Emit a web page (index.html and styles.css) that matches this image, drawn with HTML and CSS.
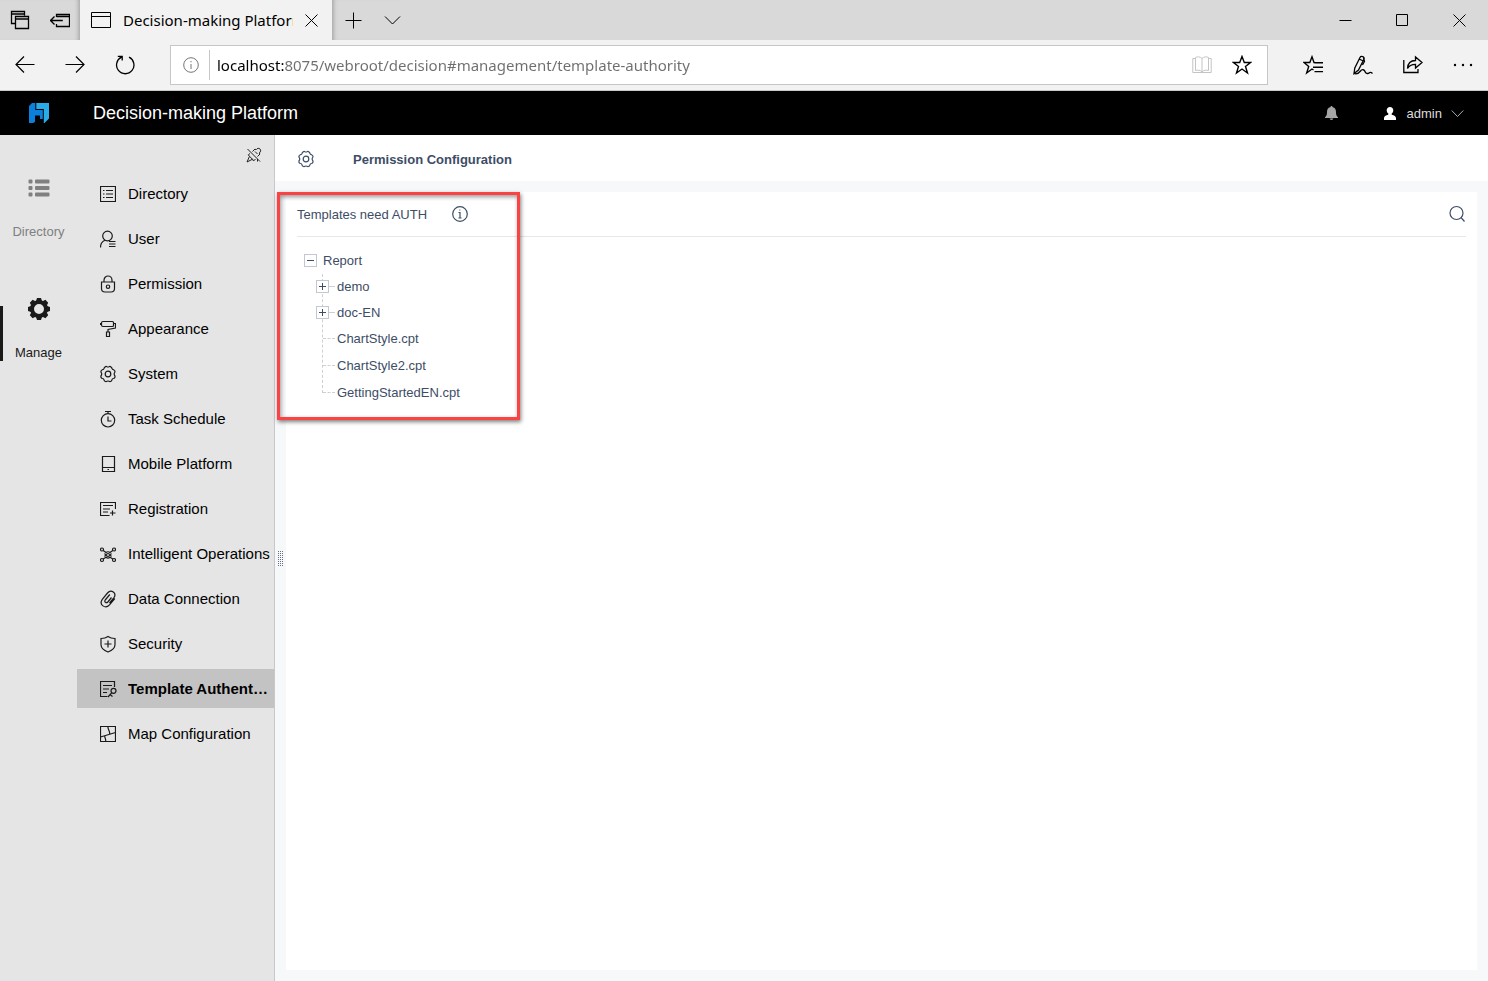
FILE: index.html
```html
<!DOCTYPE html>
<html lang="en">
<head>
<meta charset="utf-8">
<title>Decision-making Platform</title>
<link rel="stylesheet" href="styles.css">
</head>
<body>
<div class="window">
  <div class="tabbar">
    <div class="tab-tools">
      <button class="plain" aria-label="Tabs set aside"><svg width="20" height="20" viewBox="0 0 20 20"><path stroke-width="1.300" d="M5.500 13.500h-4v-12h13v4M1.500 4h13M5.500 6.500h13v12h-13zM5.500 9h13"/></svg></button>
      <button class="plain" aria-label="Set tabs aside"><svg width="20" height="20" viewBox="0 0 20 20"><path stroke-width="1.300" d="M6.500 7V4.500h13v12h-13V14M6.500 6.500h13M.8 10.500h12M4.500 6.500l-4 4 4 4"/></svg></button>
    </div>
    <div class="tab">
      <svg width="20" height="16" viewBox="0 0 20 16"><path d="M.5.5h19v15H.5zM.5 4.500h19"/></svg>
      <span class="tab-title">Decision-making Platform</span>
      <button class="plain" aria-label="Close tab"><svg width="13" height="13" viewBox="0 0 13 13"><path d="M.5.5l12 12M12.500.5l-12 12"/></svg></button>
    </div>
    <div class="tab-more">
      <button class="plain" aria-label="New tab"><svg width="17" height="17" viewBox="0 0 17 17"><path d="M8.500.5v16M.5 8.500h16"/></svg></button>
      <button class="plain" aria-label="Tab previews"><svg width="17" height="17" viewBox="0 0 17 17"><path d="M1 4.500l7.500 7.500L16 4.500"/></svg></button>
    </div>
    <div class="window-controls">
      <button class="plain" aria-label="Minimize"><svg width="13" height="13" viewBox="0 0 13 13"><path d="M.5 6.500h12"/></svg></button>
      <button class="plain" aria-label="Maximize"><svg width="13" height="13" viewBox="0 0 13 13"><path d="M.5.5h11v11H.5z"/></svg></button>
      <button class="plain" aria-label="Close"><svg width="13" height="13" viewBox="0 0 13 13"><path d="M.5.5l12 12M12.500.5l-12 12"/></svg></button>
    </div>
  </div>

  <div class="navbar">
    <div class="nav-buttons">
      <button class="plain" aria-label="Back"><svg width="20" height="20" viewBox="0 0 20 20"><path stroke-width="1.200" d="M9 1.500L1 9.500l8 8M1 9.500h18.500"/></svg></button>
      <button class="plain" aria-label="Forward"><svg width="20" height="20" viewBox="0 0 20 20"><path stroke-width="1.200" d="M11 1.500l8 8-8 8M19 9.500H.5"/></svg></button>
      <button class="plain" aria-label="Refresh"><svg width="20" height="20" viewBox="0 0 20 20"><path stroke-width="1.300" d="M14 2.200A8.700 8.700 0 1 1 6.500 2.200M2.800 1.400h4.400v4"/></svg></button>
    </div>
    <div class="address">
      <svg class="muted" width="16" height="16" viewBox="0 0 16 16"><circle cx="8" cy="8" r="7.300"/><path d="M8 7v5M8 4v1.300"/></svg>
      <span class="address-rule"></span>
      <input class="url" type="text" aria-label="Address" value="localhost:8075/webroot/decision#management/template-authority">
      <button class="plain" aria-label="Reading view"><svg class="faint" width="20" height="18" viewBox="0 0 20 18"><path d="M10 2.500C8 .5 5 .5 3.500 1.500v13c2-.7 5-.5 6.500 1.500 1.500-2 4.500-2.200 6.500-1.500v-13C15 .5 12 .5 10 2.500zM10 2.500V16M3 2.500H.8v14H10M17 2.500h2.200v14H10"/></svg></button>
      <button class="plain" aria-label="Favorite"><svg width="20" height="20" viewBox="0 0 20 20"><path stroke-width="1.400" d="M10 1.500l2.300 6h6.200l-5 3.900 2 6.600-5.500-4-5.500 4 2-6.600-5-3.900h6.200z"/></svg></button>
    </div>
    <div class="nav-tools">
      <button class="plain" aria-label="Hub"><svg width="20" height="20" viewBox="0 0 20 20"><path stroke-width="1.400" d="M11.500 7.500H11L9 1.800 6.800 7.500H1l4.700 4-2 6.500L9 14l1.500 1M11.500 7.700H20M10 12.200h10M11.500 16.600H20"/></svg></button>
      <button class="plain" aria-label="Add notes"><svg width="20" height="20" viewBox="0 0 20 20"><path stroke-width="1.300" d="M1 18.500l.8-5.500L7 2.500c1-2 5-.7 4 1.500L5.500 15zM6 4l4.500 2M10.500 2.500l1 4L9.500 10M1 18.500c3 1 5-.5 6.500-2.500s4-1.500 4.500.5 3 2.500 4 1.500 1.800-1.200 3.500.5"/></svg></button>
      <button class="plain" aria-label="Share"><svg width="20" height="20" viewBox="0 0 20 20"><path stroke-width="1.300" d="M.8 5v12.500H15V14M4.500 13.500c.3-5 3-8 8-8V2L19 7.500 12.500 13V9.300c-4 0-6.500 1.200-8 4.200z"/></svg></button>
      <button class="plain" aria-label="Settings and more"><svg class="solid" width="20" height="20" viewBox="0 0 20 20"><circle cx="2" cy="10" r="1.200"/><circle cx="10" cy="10" r="1.200"/><circle cx="18" cy="10" r="1.200"/></svg></button>
    </div>
  </div>

  <header class="app-header">
    <svg class="logo" width="20" height="20" viewBox="0 0 20 20"><path fill="#0a7fdc" d="M3 0h3.300v7h7.500v9H11v-3.500H6V19l-2 1H0V3z"/><path fill="#29abe8" d="M7.300 0H20v15.500L15.500 20h-.7V6H7.300z"/></svg>
    <h1 class="app-name">Decision-making Platform</h1>
    <button class="plain bell" aria-label="Notifications"><svg width="13" height="14" viewBox="0 0 13 14"><path fill="#a6a6a6" d="M6.500 0c.7 0 1 .5 1 1 2.500.6 3.500 2.500 3.500 5 0 3 .5 4 2 5.200v.8H0v-.8C1.500 10 2 9 2 6c0-2.500 1-4.400 3.500-5 0-.5.300-1 1-1zM4.700 12.500h3.600a1.800 1.500 0 0 1-3.600 0z"/></svg></button>
    <button class="plain account"><svg width="12" height="13" viewBox="0 0 12 13"><path fill="#fff" d="M6 0c2 0 3.300 1.400 3.300 3.300C9.300 4.700 8.600 6 7.700 6.600v1.200c2.700.6 4.300 1.500 4.300 3.500V13H0v-1.700c0-2 1.600-2.900 4.300-3.500V6.600C3.400 6 2.700 4.700 2.700 3.300 2.700 1.400 4 0 6 0z"/></svg><span>admin</span><svg class="chevron" width="13" height="13" viewBox="0 0 13 13"><path d="M.7 3.500l5.800 6 5.800-6"/></svg></button>
  </header>

  <div class="workspace">
    <nav class="rail">
      <button class="plain rail-item"><svg width="22" height="22" viewBox="0 0 22 22"><path fill="#808080" d="M1.500 2.500h2a1 1 0 0 1 1 1v2a1 1 0 0 1-1 1h-2a1 1 0 0 1-1-1v-2a1 1 0 0 1 1-1zm6.500 0h12.500a1 1 0 0 1 1 1v2a1 1 0 0 1-1 1H8a1 1 0 0 1-1-1v-2a1 1 0 0 1 1-1zM1.500 9h2a1 1 0 0 1 1 1v2a1 1 0 0 1-1 1h-2a1 1 0 0 1-1-1v-2a1 1 0 0 1 1-1zM8 9h12.500a1 1 0 0 1 1 1v2a1 1 0 0 1-1 1H8a1 1 0 0 1-1-1v-2a1 1 0 0 1 1-1zm-6.500 6.500h2a1 1 0 0 1 1 1v2a1 1 0 0 1-1 1h-2a1 1 0 0 1-1-1v-2a1 1 0 0 1 1-1zm6.500 0h12.500a1 1 0 0 1 1 1v2a1 1 0 0 1-1 1H8a1 1 0 0 1-1-1v-2a1 1 0 0 1 1-1z"/></svg><span>Directory</span></button>
      <button class="plain rail-item active"><svg width="22" height="22" viewBox="0 0 22 22"><circle cx="11" cy="11" r="7" stroke="#1a1a1a" stroke-width="4"/><g fill="#1a1a1a"><path id="tooth" d="M8 3L9 0h4l1 3z"/><use href="#tooth" transform="rotate(45 11 11)"/><use href="#tooth" transform="rotate(90 11 11)"/><use href="#tooth" transform="rotate(135 11 11)"/><use href="#tooth" transform="rotate(180 11 11)"/><use href="#tooth" transform="rotate(225 11 11)"/><use href="#tooth" transform="rotate(270 11 11)"/><use href="#tooth" transform="rotate(315 11 11)"/></g></svg><span>Manage</span></button>
    </nav>

    <aside class="sidebar">
      <button class="plain pin" aria-label="Unpin menu"><svg width="16" height="16" viewBox="0 0 16 16"><path d="M1.500 2l12.500 12.500M6.500 4.500L9 2l1 .8c1.300-1.800 3-1.800 4-.8s1 2.700-.8 4l.8 1-2.500 2.500M4 6.500L2.300 7.800l1.200 1.500L1 15l5.500-2.800 1 1.800L9.500 12M3.500 9.300l3 3M9 4.500L11.500 7M11.500 12v2.500"/></svg></button>
      <ul class="menu">
        <li><a href="#directory"><svg width="16" height="18" viewBox="0 0 16 18"><path d="M.5 1.500h15v15H.5zM3 5.500h1.500M6 5.500h7M3 9h1.500M6 9h7M3 12.500h1.500M6 12.500h7"/></svg><span>Directory</span></a></li>
        <li><a href="#user"><svg width="16" height="18" viewBox="0 0 16 18"><circle cx="7.500" cy="6" r="4.800"/><path d="M.5 17.500c0-4 1.500-6 4.500-7.200M9 11.500h6.500M9 14h6.500M9 16.500h6.500"/></svg><span>User</span></a></li>
        <li><a href="#permission"><svg width="16" height="18" viewBox="0 0 16 18"><path d="M4 7V5.200a4 4.200 0 0 1 8 0V7M1.500 7h13v6.500q0 3.500-3.500 3.500H5q-3.500 0-3.500-3.500z"/><circle cx="8" cy="11.700" r="1.700"/></svg><span>Permission</span></a></li>
        <li><a href="#appearance"><svg width="16" height="18" viewBox="0 0 16 18"><path d="M3 1.500h9.500q1 0 1 1v3q0 1-1 1H3q-1.500 0-1.500-1.500V3Q1.500 1.500 3 1.500zM.5 3v2M13.500 3.500h2v4.500L8 9.500v2.500M6.500 12h3v4.500h-3z"/></svg><span>Appearance</span></a></li>
        <li><a href="#system"><svg width="16" height="18" viewBox="0 0 16 18"><path id="cog" d="M5 2q1-1 2-.3 1 .6 2 0 1-.7 2 .3.800.6 1 1.500.3 1 1.500 1.200 1.500.5 1.500 1.800-.1 1-.6 1.500-.6 1 0 2 .8.8.6 2-.3 1.300-1.500 1.500-1.300.1-1.600 1.300-.2 1-.9 1.500-1 .7-2 0-1-.6-2 0-1 .7-2 0-.8-.6-1-1.500-.3-1.100-1.600-1.300-1.200-.3-1.500-1.500-.1-1.200.6-2 .6-1 0-2-.6-.6-.6-1.500 0-1.300 1.500-1.800Q3.800 4.500 4 3.500 4.300 2.500 5 2z"/><circle cx="8" cy="9" r="2.800"/></svg><span>System</span></a></li>
        <li><a href="#schedule"><svg width="16" height="18" viewBox="0 0 16 18"><circle cx="8" cy="10.300" r="6.700"/><path d="M5 1.500h6M8 1.500v2M8 6.500v4.500h3.500"/></svg><span>Task Schedule</span></a></li>
        <li><a href="#mobile"><svg width="16" height="18" viewBox="0 0 16 18"><path d="M2.500 1.500h12v15h-12zM2.500 12.500h12M7.500 14.500H9"/></svg><span>Mobile Platform</span></a></li>
        <li><a href="#registration"><svg width="16" height="18" viewBox="0 0 16 18"><path d="M15.500 9V2.500H.5v13h9M3 5.500h10M3 9h7M3 12h5M12.500 10.500v5M10 13h5.500"/></svg><span>Registration</span></a></li>
        <li><a href="#operations"><svg width="16" height="18" viewBox="0 0 16 18"><circle cx="2" cy="4.500" r="1.500"/><circle cx="14" cy="4.500" r="1.500"/><circle cx="2" cy="15" r="1.500"/><circle cx="14" cy="15" r="1.500"/><circle cx="8" cy="10" r="1.500"/><path d="M3.200 5.500L6 7.500q2-1.500 4 0l2.800-2M3.200 14L6 12.200q2 1.800 4 0l2.800 1.800M4.500 8.500Q6.500 10 4.500 11.500M11.500 8.500q-2 1.500 0 3"/></svg><span>Intelligent Operations</span></a></li>
        <li><a href="#connection"><svg width="16" height="18" viewBox="0 0 16 18"><path d="M11.500 7.500L7.800 12c-1.500 1.600-4-.2-2.600-2l4.600-5.500M14.800 8.500L9.500 14.800c-4 4.500-11 .2-7.200-5.500L7.500 3c3.700-4.200 9.700.2 6.300 4.800L9.500 13"/></svg><span>Data Connection</span></a></li>
        <li><a href="#security"><svg width="16" height="18" viewBox="0 0 16 18"><path d="M8 1.500c2 1.500 4.500 2 7 2v6c0 3.500-3 6-7 7.500-4-1.500-7-4-7-7.500v-6c2.500 0 5-.5 7-2zM8 5.500v7M4.500 9h7"/></svg><span>Security</span></a></li>
        <li><a class="current" href="#template-authority" aria-current="page"><svg width="18" height="18" viewBox="0 0 18 18"><path d="M14.500 7V1.500H.5v15h7M3 5.500h9M3 9h6M3 12.500h4"/><circle cx="13.500" cy="10.800" r="2.500"/><path d="M11.800 12.600L8 17M10 14.500l2.500 2"/></svg><span>Template Authentication</span></a></li>
        <li><a href="#map"><svg width="16" height="18" viewBox="0 0 16 18"><path d="M.5 1.500h15v15H.5zM.5 12l15-4.500M8 1.500c-.5 3 2.500 5 1.500 8M5 10.700c-1 2 1.500 3 .5 5.800"/></svg><span>Map Configuration</span></a></li>
      </ul>
    </aside>

    <main class="content">
      <div class="splitter"><svg width="6" height="15" viewBox="0 0 6 15"><path stroke="#66717f" stroke-width="1" stroke-dasharray="1 1" d="M.5 0v15M2.500 0v15M4.500 0v15"/></svg></div>
      <div class="crumb">
        <svg class="slate" width="16" height="18" viewBox="0 0 16 18"><use href="#cog"/><circle cx="8" cy="9" r="2.800"/></svg>
        <h2 class="crumb-title">Permission Configuration</h2>
      </div>
      <section class="panel">
        <div class="panel-head">
          <span>Templates need AUTH</span>
          <button class="plain" aria-label="Information"><svg class="slate" width="16" height="16" viewBox="0 0 16 16"><circle cx="8" cy="8" r="7.300"/><path d="M6.500 6.500H8V12M6.500 12h3M7.300 4h1"/></svg></button>
          <button class="plain search" aria-label="Search"><svg class="slate" width="18" height="18" viewBox="0 0 18 18"><circle cx="8.500" cy="8" r="6.500"/><path d="M13 12.500l3.500 4"/></svg></button>
        </div>
        <div class="tree">
          <div class="node"><button class="toggle" aria-label="Collapse Report"><svg width="9" height="9" viewBox="0 0 9 9"><path d="M1 4.500h7"/></svg></button><span>Report</span></div>
          <ul class="children">
            <li class="node child"><button class="toggle" aria-label="Expand demo"><svg width="9" height="9" viewBox="0 0 9 9"><path d="M1 4.500h7M4.500 1v7"/></svg></button><i class="stub"></i><span>demo</span></li>
            <li class="node child"><button class="toggle" aria-label="Expand doc-EN"><svg width="9" height="9" viewBox="0 0 9 9"><path d="M1 4.500h7M4.500 1v7"/></svg></button><i class="stub"></i><span>doc-EN</span></li>
            <li class="node child file"><i class="stub"></i><span>ChartStyle.cpt</span></li>
            <li class="node child file"><i class="stub"></i><span>ChartStyle2.cpt</span></li>
            <li class="node child file"><i class="stub"></i><span>GettingStartedEN.cpt</span></li>
          </ul>
        </div>
      </section>
      <div class="highlight"></div>
    </main>
  </div>
</div>
</body>
</html>
```
FILE: styles.css
```css
* { box-sizing: border-box; }
body { margin: 0; font-family: "Liberation Sans", Arial, sans-serif; font-size: 13px; color: #3d4d66; }
svg { display: block; flex: none; fill: none; stroke: #000; stroke-width: 1; }
h1, h2, ul { margin: 0; padding: 0; font: inherit; list-style: none; }
.plain { display: flex; align-items: center; margin: 0; padding: 0; border: 0; background: none; font: inherit; color: inherit; }
.window { display: flex; flex-direction: column; min-height: 100vh; }

/* Browser tabs */
.tabbar { display: flex; height: 40px; background: #d9d9d9; }
.tab-tools { display: flex; align-items: center; gap: 20px; width: 80px; padding-left: 10px; box-shadow: inset -5px 0 5px -4px #999; }
.tab { display: flex; align-items: center; width: 252px; padding: 0 14px 0 11px; gap: 12px; background: #f2f2f2; font-family: "Noto Sans", sans-serif; font-size: 15px; color: #000; }
.tab-title { flex: 1; overflow: hidden; white-space: nowrap; line-height: 24px; }
.tab-more { display: flex; align-items: center; gap: 22px; padding-left: 13px; box-shadow: inset 5px 0 5px -4px #999; }
.window-controls { display: flex; align-items: center; gap: 44px; margin-left: auto; padding-right: 22px; }

/* Browser toolbar */
.navbar { display: flex; align-items: center; height: 51px; padding-right: 15px; border-bottom: 1px solid #c8c8c8; background: #f2f2f2; }
.nav-buttons { display: flex; gap: 30px; width: 170px; padding-left: 15px; }
.address { display: flex; align-items: center; flex: 1; height: 40px; padding: 0 15px 0 12px; border: 1px solid #c6c6c6; background: #fff; }
.address-rule { width: 1px; height: 30px; margin: 0 7px 0 10px; background: #c6c6c6; }
.address .plain { margin-left: 20px; }
.url { flex: 1; min-width: 0; height: 30px; padding: 0; border: 0; font-family: "Noto Sans", sans-serif; font-size: 15px; color: transparent; background: linear-gradient(to right, #000 68px, #6e6e6e 68px); background-clip: text; -webkit-background-clip: text; }
.nav-tools { display: flex; gap: 30px; margin-left: 35px; }
.muted { stroke: #777; }
.faint { stroke: #c4c4c4; }
.solid { fill: #000; stroke: none; }

/* Application header */
.app-header { display: flex; align-items: center; height: 44px; padding: 0 24px 0 29px; background: #000; color: #fff; }
.app-header svg { stroke: none; }
.app-name { flex: 1; margin-left: 44px; font-size: 18px; line-height: 24px; }
.bell { margin-right: 46px; }
.account { gap: 11px; color: #ddd; }
.account .chevron { stroke: #aaa; margin-left: -2px; }

/* Navigation */
.workspace { display: flex; flex: 1; }
.rail { display: flex; flex-direction: column; gap: 59px; width: 77px; padding-top: 42px; background: #e5e5e5; }
.rail-item { position: relative; flex-direction: column; gap: 25px; line-height: 15px; color: #808080; }
.rail-item svg { stroke: none; }
.rail-item.active { color: #1a1a1a; }
.rail-item.active::before { content: ""; position: absolute; left: 0; top: 8px; width: 3px; height: 55px; background: #1a1a1a; }
.sidebar { display: flex; flex-direction: column; width: 198px; border-right: 1px solid #c8c8c8; background: #e5e5e5; }
.pin { align-self: flex-end; height: 39px; padding-right: 12px; }
.pin svg { stroke: #222; }
.menu { display: flex; flex-direction: column; gap: 6px; font-size: 15px; }
.menu a { display: flex; align-items: center; gap: 12px; height: 39px; padding-left: 23px; color: #000; text-decoration: none; white-space: nowrap; }
.menu svg { stroke: #1a1a1a; stroke-width: 1.200; }
.menu .current { gap: 10px; padding-right: 2px; background: #c3c3c3; font-weight: bold; }
.current span { overflow: hidden; text-overflow: ellipsis; }

/* Content */
.content { position: relative; display: flex; flex: 1; flex-direction: column; background: #f7f8fa; }
.crumb { display: flex; align-items: center; gap: 39px; height: 46px; padding: 2px 0 0 23px; background: #fff; }
.crumb-title { font-weight: bold; }
.slate { stroke: #3d4d66; stroke-width: 1.200; }
.panel { flex: 1; margin: 11px; padding: 0 11px; background: #fff; }
.panel-head { display: flex; align-items: center; gap: 25px; height: 45px; border-bottom: 1px solid #e6e7e9; }
.search { margin-left: auto; }
.splitter { position: absolute; left: 3px; top: 416px; }
.highlight { position: absolute; left: 2px; top: 57px; width: 243px; height: 228px; border: 3px solid #fb4343; box-shadow: 1px 2px 4px rgba(0,0,0,.5), inset 1px 2px 4px rgba(0,0,0,.4); pointer-events: none; }

/* Template tree */
.tree { padding: 10px 0 0 7px; }
.node { display: flex; align-items: center; height: 26px; }
.node > .toggle { margin-right: 6px; }
.toggle { display: flex; align-items: center; justify-content: center; width: 13px; height: 13px; padding: 0; border: 1px solid #c3c8d0; background: #fff; }
.toggle svg { stroke: #3d4d66; }
.children { position: relative; padding-left: 12px; }
.children::before { content: ""; position: absolute; left: 18px; top: 1px; height: 119px; border-left: 1px dashed #ccd0d6; }
.child { position: relative; }
.child > .toggle { margin-right: 0; }
.stub { width: 6px; margin-right: 2px; border-top: 1px dashed #ccd0d6; }
.file { height: 27px; padding-left: 7px; }
.file .stub { width: 12px; }
```
